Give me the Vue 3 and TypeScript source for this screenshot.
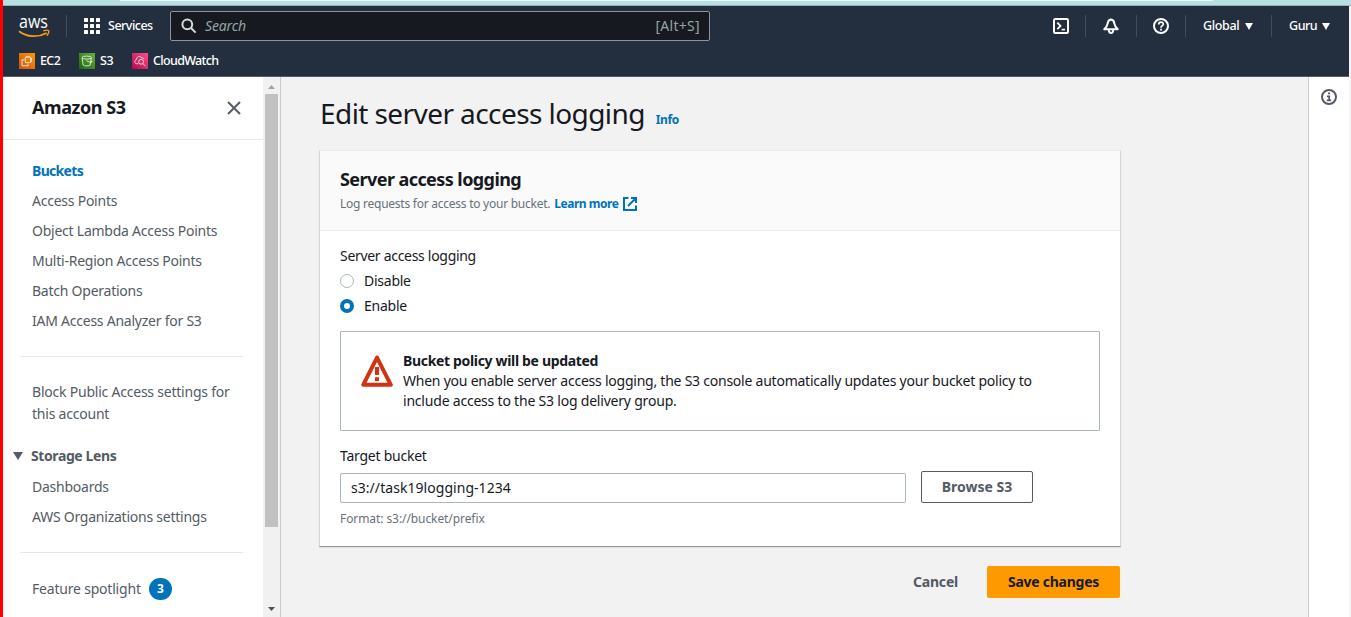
<script setup lang="ts">
import { ref } from 'vue'

interface NavLink {
  label: string
  active?: boolean
}

const primaryLinks: NavLink[] = [
  { label: 'Buckets', active: true },
  { label: 'Access Points' },
  { label: 'Object Lambda Access Points' },
  { label: 'Multi-Region Access Points' },
  { label: 'Batch Operations' },
  { label: 'IAM Access Analyzer for S3' },
]
const lensLinks: NavLink[] = [{ label: 'Dashboards' }, { label: 'AWS Organizations settings' }]

const logging = ref<'Disable' | 'Enable'>('Enable')
const options = ['Disable', 'Enable'] as const
const target = ref('s3://task19logging-1234')
</script>

<template>
  <div class="frame">
    <div class="tabstrip"><div class="tabstrip-light"></div></div>
    <div class="window">
      <header class="topbar">
        <div class="row main-row">
          <svg class="aws" width="34" height="36" viewBox="0 -8 34 36">
            <text x="1" y="12.2" textLength="29" lengthAdjust="spacingAndGlyphs">aws</text>
            <path d="M1 15.2 C9 21.2 20 21.8 28.6 17" fill="none" stroke="#f79a1c" stroke-width="1.8" />
            <path d="M25.2 15 C27.4 14 30 14.1 30.7 14.8 C31.1 15.8 30.2 18.2 28.8 19.8" fill="none" stroke="#f79a1c" stroke-width="1.3" />
          </svg>
          <i class="divider d-logo"></i>
          <svg class="grid-icon" width="16" height="16" viewBox="0 0 16 16" fill="#fff">
            <template v-for="r in 3" :key="r">
              <rect v-for="c in 3" :key="c" :x="(c - 1) * 6" :y="(r - 1) * 6" width="4" height="4" rx="0.6" />
            </template>
          </svg>
          <span class="t services">Services</span>
          <div class="search">
            <svg width="16" height="16" viewBox="0 0 16 16" fill="none" stroke="#d5dbdb" stroke-width="2">
              <circle cx="6.3" cy="6.3" r="4.9" />
              <path d="M9.8 9.8 L14.6 14.6" />
            </svg>
            <span class="placeholder">Search</span>
            <span class="hint">[Alt+S]</span>
          </div>
          <div class="tools">
            <svg class="shell" width="16" height="16" viewBox="0 0 16 16" fill="none" stroke="#fff" stroke-width="2">
              <rect x="1" y="1" width="14" height="14" rx="1.2" />
              <path d="M4.3 4.6 L7.5 7.9 L4.3 11.2" stroke-width="1.8" />
              <path d="M8.6 11.6 H12" stroke-width="1.6" />
            </svg>
            <i class="divider"></i>
            <svg class="bell" width="16" height="16" viewBox="0 0 16 16" fill="none" stroke="#fff" stroke-width="2" stroke-linejoin="round">
              <path d="M8 1.4 C5.6 1.8 4.8 3.4 4.6 5.6 C4.4 7.6 3.4 9 1.3 11.2 H14.7 C12.6 9 11.6 7.6 11.4 5.6 C11.2 3.4 10.4 1.8 8 1.4 Z" />
              <path d="M5.8 12 C5.8 16 10.2 16 10.2 12" stroke-width="1.8" />
            </svg>
            <i class="divider"></i>
            <svg class="help" width="16" height="16" viewBox="0 0 16 16" fill="none" stroke="#fff" stroke-width="2">
              <circle cx="8" cy="8" r="7" />
              <path d="M5.7 6.4 C5.7 3.2 10.4 3.4 10.3 6.2 C10.2 7.8 8 7.6 8 9.8" stroke-width="1.7" />
              <path d="M8 10.8 V12.5" stroke-width="1.8" />
            </svg>
            <i class="divider"></i>
            <span class="t global">Global</span>
            <svg class="caret" width="8" height="7" viewBox="0 0 8 7"><path d="M0 0 H8 L4 7 Z" fill="#fff" /></svg>
            <i class="divider"></i>
            <span class="t guru">Guru</span>
            <svg class="caret" width="8" height="7" viewBox="0 0 8 7"><path d="M0 0 H8 L4 7 Z" fill="#fff" /></svg>
          </div>
        </div>
        <div class="row fav-row">
          <span class="tile orange">
            <svg width="16" height="16" viewBox="0 0 16 16" fill="none" stroke="#fff" stroke-opacity=".85" stroke-width=".9">
              <rect x="6.3" y="4.2" width="5.4" height="5.4" rx=".5" />
              <path d="M5.3 6.8 H3 V12.8 H9 V10.6 M7.5 3 V4.2 M9 3 V4.2 M10.6 3 V4.2 M11.7 5.5 H13 M11.7 7 H13 M11.7 8.5 H13" />
            </svg>
          </span>
          <span class="t ec2">EC2</span>
          <span class="tile green">
            <svg width="16" height="16" viewBox="0 0 16 16" fill="none" stroke="#fff" stroke-opacity=".85" stroke-width=".9">
              <ellipse cx="7.7" cy="4.6" rx="4.7" ry="1.5" />
              <path d="M3 4.6 L4.2 12 C5.5 13.3 10 13.3 11.2 12 L12.4 4.6 M7.4 7.6 C10 9.2 12.8 10 13 8.8 C13 8.2 12.4 7.6 11.9 7.3" />
            </svg>
          </span>
          <span class="t s3">S3</span>
          <span class="tile pink">
            <svg width="16" height="16" viewBox="0 0 16 16" fill="none" stroke="#fff" stroke-opacity=".85" stroke-width=".9">
              <path d="M6.2 10.7 H4.6 C2.2 10.5 2.2 7.2 4.3 6.9 C4.1 3.6 8.4 2.2 9.8 5.1 C11 4.5 11.9 5.2 11.9 6.4" />
              <circle cx="9.1" cy="8.8" r="2.4" />
              <path d="M10.9 10.6 L13.4 13.2" />
            </svg>
          </span>
          <span class="t cw">CloudWatch</span>
        </div>
      </header>

      <div class="body">
        <nav class="sidebar">
          <div class="side-head">
            <span class="side-title">Amazon S3</span>
            <svg width="14" height="14" viewBox="0 0 14 14" stroke="#545b64" stroke-width="2"><path d="M1 1 L13 13 M13 1 L1 13" /></svg>
          </div>
          <ul class="links first">
            <li v-for="l in primaryLinks" :key="l.label" :class="{ active: l.active }"><span>{{ l.label }}</span></li>
          </ul>
          <hr />
          <p class="block-public">Block Public Access settings for<br />this account</p>
          <div class="lens">
            <svg width="10" height="8" viewBox="0 0 10 8"><path d="M0 0 H10 L5 8 Z" fill="#545b64" /></svg>
            <span>Storage Lens</span>
          </div>
          <ul class="links">
            <li v-for="l in lensLinks" :key="l.label"><span>{{ l.label }}</span></li>
          </ul>
          <hr class="second" />
          <div class="spotlight"><span>Feature spotlight</span><b>3</b></div>
        </nav>
        <div class="scrollbar">
          <svg width="7" height="4" viewBox="0 0 7 4"><path d="M0 4 L3.5 0 L7 4 Z" fill="#a3a3a3" /></svg>
          <div class="thumb"></div>
          <svg class="down" width="7" height="4" viewBox="0 0 7 4"><path d="M0 0 L3.5 4 L7 0 Z" fill="#505050" /></svg>
        </div>

        <main>
          <h1><span class="h1-text">Edit server access logging</span><a class="info">Info</a></h1>
          <section class="card">
            <div class="card-head">
              <h2>Server access logging</h2>
              <p>
                <span class="desc">Log requests for access to your bucket.</span>
                <a class="learn">Learn more</a>
                <svg width="14" height="14" viewBox="0 0 14 14" fill="none" stroke="#0073bb" stroke-width="2">
                  <path d="M5.5 1 H1 V13 H13 V8.5 M8 1 H13 V6 M13 1 L5 9" />
                </svg>
              </p>
            </div>
            <div class="card-body">
              <div class="label">Server access logging</div>
              <div v-for="o in options" :key="o" class="radio" @click="logging = o">
                <i :class="{ on: logging === o }"></i><span>{{ o }}</span>
              </div>
              <div class="alert">
                <svg width="32" height="32" viewBox="0 0 32 32" fill="none" stroke="#d13212" stroke-width="4" stroke-linejoin="round">
                  <path d="M16 2.6 L29.8 29.8 H2.2 Z" />
                  <path d="M16 12 V20 M16 22.2 V26" />
                </svg>
                <div>
                  <strong>Bucket policy will be updated</strong>
                  <p class="a1">When you enable server access logging, the S3 console automatically updates your bucket policy to</p>
                  <p class="a2">include access to the S3 log delivery group.</p>
                </div>
              </div>
              <div class="label target-label">Target bucket</div>
              <div class="target">
                <input v-model="target" type="text" spellcheck="false" />
                <button class="browse">Browse S3</button>
              </div>
              <div class="format">Format: s3://bucket/prefix</div>
            </div>
          </section>
          <div class="actions">
            <button class="cancel">Cancel</button>
            <button class="save">Save changes</button>
          </div>
        </main>
        <aside>
          <svg width="16" height="16" viewBox="0 0 16 16" fill="none" stroke="#545b64" stroke-width="2">
            <circle cx="8" cy="8" r="7" />
            <path d="M7 4.4 H9 M6 7.4 H8.2 V11 M5.8 11.4 H10.2" stroke-width="1.7" />
          </svg>
        </aside>
      </div>
    </div>
  </div>
</template>

<style>
body {
  margin: 0;
  overflow: hidden;
}
</style>

<style scoped>
* {
  box-sizing: border-box;
}
.frame {
  width: 1351px;
  height: 617px;
  display: flex;
  flex-direction: column;
  border-left: 3px solid #fe0000;
  background: #f4f4f4;
  font-family: 'Noto Sans', 'Open Sans', sans-serif;
  font-size: 14px;
  color: #16191f;
  white-space: nowrap;
  overflow: hidden;
}
.tabstrip {
  height: 6px;
  flex: none;
  background: #b8e0e3;
  border-bottom: 1px solid #93b0b8;
}
.tabstrip-light {
  width: 1093px;
  height: 1px;
  margin-left: 117px;
  background: #eef9fa;
}
.window {
  width: 1346px;
  flex: 1;
  min-height: 0;
  display: flex;
  flex-direction: column;
}
.topbar {
  height: 71px;
  flex: none;
  background: #232f3e;
  border-bottom: 1px solid #54596a;
  color: #fff;
}
.row {
  display: flex;
  align-items: center;
}
.main-row {
  height: 40px;
}
.fav-row {
  height: 30px;
  padding-left: 16px;
}
svg {
  display: block;
  flex: none;
}
.t {
  font-size: 12.5px;
  font-weight: 500;
  line-height: 20px;
  display: block;
  margin-top: -1px;
}
.aws {
  margin-left: 15px;
  overflow: visible;
}
.aws text {
  font: 500 18px 'Open Sans', sans-serif;
  fill: #fff;
}
.divider {
  width: 1px;
  height: 22px;
  background: #414d5c;
  flex: none;
}
.d-logo {
  margin-left: 14px;
}
.grid-icon {
  margin-left: 17px;
}
.main-row .services {
  width: 46px;
  margin-left: 8px;
  letter-spacing: -0.5px;
}
.search {
  width: 540px;
  height: 30px;
  margin-left: 16px;
  padding: 0 9px 0 10px;
  display: flex;
  align-items: center;
  background: #16191f;
  border: 1px solid #8d9599;
  border-radius: 2px;
  color: #95a5a6;
}
.placeholder {
  margin: -1px 0 0 8px;
  font-style: italic;
  letter-spacing: -0.15px;
}
.hint {
  margin: -1px 0 0 auto;
  letter-spacing: 0.3px;
}
.tools {
  display: flex;
  align-items: center;
  margin-left: 343px;
}
.shell,
.help {
  margin-right: 16px;
}
.bell {
  margin: 0 17px;
}
.help {
  margin-left: 16px;
}
.global {
  width: 36px;
  margin-left: 17px;
  letter-spacing: -0.35px;
}
.caret {
  margin-left: 6px;
}
.global + .caret {
  margin-right: 18px;
}
.guru {
  width: 27px;
  margin-left: 17px;
  letter-spacing: -0.45px;
}
.tile {
  width: 16px;
  height: 16px;
  flex: none;
}
.orange {
  background: linear-gradient(45deg, #c8511b, #f90);
}
.green {
  background: linear-gradient(45deg, #1b660f, #6cae3e);
}
.pink {
  background: linear-gradient(45deg, #b0084d, #ff4f8b);
}
.ec2 {
  width: 23px;
  margin: 0 16px 0 5px;
  letter-spacing: -0.6px;
}
.s3 {
  width: 15px;
  margin: 0 17px 0 5px;
  letter-spacing: -0.4px;
}
.cw {
  margin-left: 5px;
  letter-spacing: -0.66px;
}
.body {
  flex: 1;
  min-height: 0;
  display: flex;
}
.sidebar {
  width: 260px;
  flex: none;
  background: #fff;
  color: #545b64;
  overflow: hidden;
}
.side-head {
  height: 63px;
  padding: 0 22px 1px 29px;
  display: flex;
  align-items: center;
  justify-content: space-between;
  border-bottom: 1px solid #e6e8e8;
}
.side-title {
  margin-top: -2px;
  font-size: 18px;
  font-weight: 700;
  color: #16191f;
  letter-spacing: -0.42px;
}
ul {
  list-style: none;
  margin: 0;
  padding: 0 0 0 29px;
}
.first {
  padding-top: 16px;
}
li {
  height: 30px;
  line-height: 30px;
  letter-spacing: -0.24px;
}
li.active {
  color: #0073bb;
  font-weight: 700;
  letter-spacing: -0.68px;
}
hr {
  border: 0;
  height: 1px;
  background: #e6e8e8;
  margin: 20px 20px 0 17px;
}
.block-public {
  margin: 24px 0 0 29px;
  line-height: 22px;
  letter-spacing: -0.22px;
}
.lens {
  height: 22px;
  margin: 20px 0 5px 10px;
  display: flex;
  align-items: center;
  font-weight: 700;
  letter-spacing: -0.4px;
}
.lens span {
  margin: -1px 0 0 8px;
}
.spotlight {
  height: 22px;
  margin: 25px 0 0 29px;
  display: flex;
  align-items: center;
  letter-spacing: -0.2px;
}
.spotlight span {
  margin-top: -2px;
}
.spotlight b {
  width: 23px;
  height: 22px;
  margin-left: 8px;
  border-radius: 11px;
  background: #0073bb;
  color: #fff;
  font-size: 12px;
  line-height: 21px;
  text-align: center;
}
.scrollbar {
  width: 18px;
  flex: none;
  display: flex;
  flex-direction: column;
  align-items: flex-start;
  padding: 8px 0 6px;
  background: #f1f1f1;
  border-right: 1px solid #c8cccc;
}
.scrollbar svg {
  margin-left: 5px;
}
.thumb {
  width: 13px;
  height: 433px;
  margin: 5px 0 0 2px;
  background: #c1c1c1;
}
.scrollbar .down {
  margin-top: auto;
}
main {
  flex: 1;
  min-width: 0;
  padding: 0 188px 0 38px;
  background: #f2f2f2;
}
h1 {
  height: 73px;
  margin: 0;
  padding: 14px 0 0 1px;
  display: flex;
  align-items: baseline;
  font-size: 28px;
  font-weight: 400;
  line-height: 44px;
  letter-spacing: -0.58px;
}
.info {
  margin-left: 11px;
  font-size: 12px;
  font-weight: 700;
  letter-spacing: -0.4px;
  color: #0073bb;
}
.card {
  width: 802px;
  height: 397px;
  border: 1px solid #d2d6d6;
  border-top-color: #eaeded;
  border-bottom-color: #8f9699;
  background: #fff;
  box-shadow: 0 1px 1px rgba(0, 28, 36, 0.08);
}
.card-head {
  height: 80px;
  padding: 15px 20px 0;
  background: #fafafa;
  border-bottom: 1px solid #eaeded;
}
h2 {
  margin: 0;
  font-size: 18px;
  line-height: 26px;
  letter-spacing: -0.57px;
}
.card-head p {
  height: 20px;
  margin: 2px 0 0;
  display: flex;
  align-items: center;
  font-size: 12px;
  color: #687078;
}
.desc {
  margin-top: -2px;
  letter-spacing: -0.25px;
}
.learn {
  margin: -2px 5px 0 4px;
  font-weight: 700;
  letter-spacing: -0.47px;
  color: #0073bb;
}
.card-body {
  padding: 15px 20px 0;
}
.label {
  line-height: 20px;
  letter-spacing: -0.3px;
}
.radio {
  height: 20px;
  margin-top: 5px;
  display: flex;
  align-items: center;
  letter-spacing: -0.25px;
}
.radio span {
  margin-top: -2px;
}
.radio i {
  width: 14px;
  height: 14px;
  margin-right: 10px;
  border: 1px solid #aab7b8;
  border-radius: 50%;
}
.radio i.on {
  border: 4.5px solid #0073bb;
}
.alert {
  height: 100px;
  margin-top: 15px;
  padding: 19px 20px;
  display: flex;
  border: 1px solid #aab7b8;
  border-radius: 1px;
  line-height: 20px;
}
.alert svg {
  margin: 3.5px 10px 0 0;
}
.alert p {
  margin: 0;
}
.alert strong {
  display: block;
  letter-spacing: -0.33px;
}
.a1 {
  letter-spacing: -0.236px;
}
.a2 {
  letter-spacing: -0.205px;
}
.target-label {
  margin-top: 15px;
  letter-spacing: -0.24px;
}
.target {
  height: 32px;
  margin-top: 5px;
  display: flex;
  align-items: center;
}
input {
  width: 566px;
  height: 30px;
  margin-top: 2px;
  padding: 0 10px 1px;
  border: 1px solid #aab7b8;
  border-radius: 2px;
  outline: 0;
  font: inherit;
  letter-spacing: 0.05px;
  color: #16191f;
  background: #fff;
}
button {
  height: 32px;
  padding: 0 0 2px;
  font: 700 14px 'Noto Sans', sans-serif;
  color: #545b64;
  background: transparent;
  border: 0;
  border-radius: 2px;
}
.browse {
  width: 112px;
  margin-left: 15px;
  border: 1px solid #545b64;
}
.format {
  margin-top: 7px;
  font-size: 12px;
  line-height: 18px;
  letter-spacing: -0.08px;
  color: #687078;
}
.actions {
  width: 801px;
  margin-top: 19px;
  display: flex;
  justify-content: flex-end;
}
.cancel {
  width: 45px;
  margin-right: 29px;
  letter-spacing: -0.2px;
}
.save {
  width: 133px;
  background: #f90;
  color: #16191f;
  letter-spacing: -0.25px;
}
aside {
  width: 41px;
  flex: none;
  padding: 12px 0 0 12px;
  border-left: 1px solid #c8cccc;
  background: #fff;
}
</style>
